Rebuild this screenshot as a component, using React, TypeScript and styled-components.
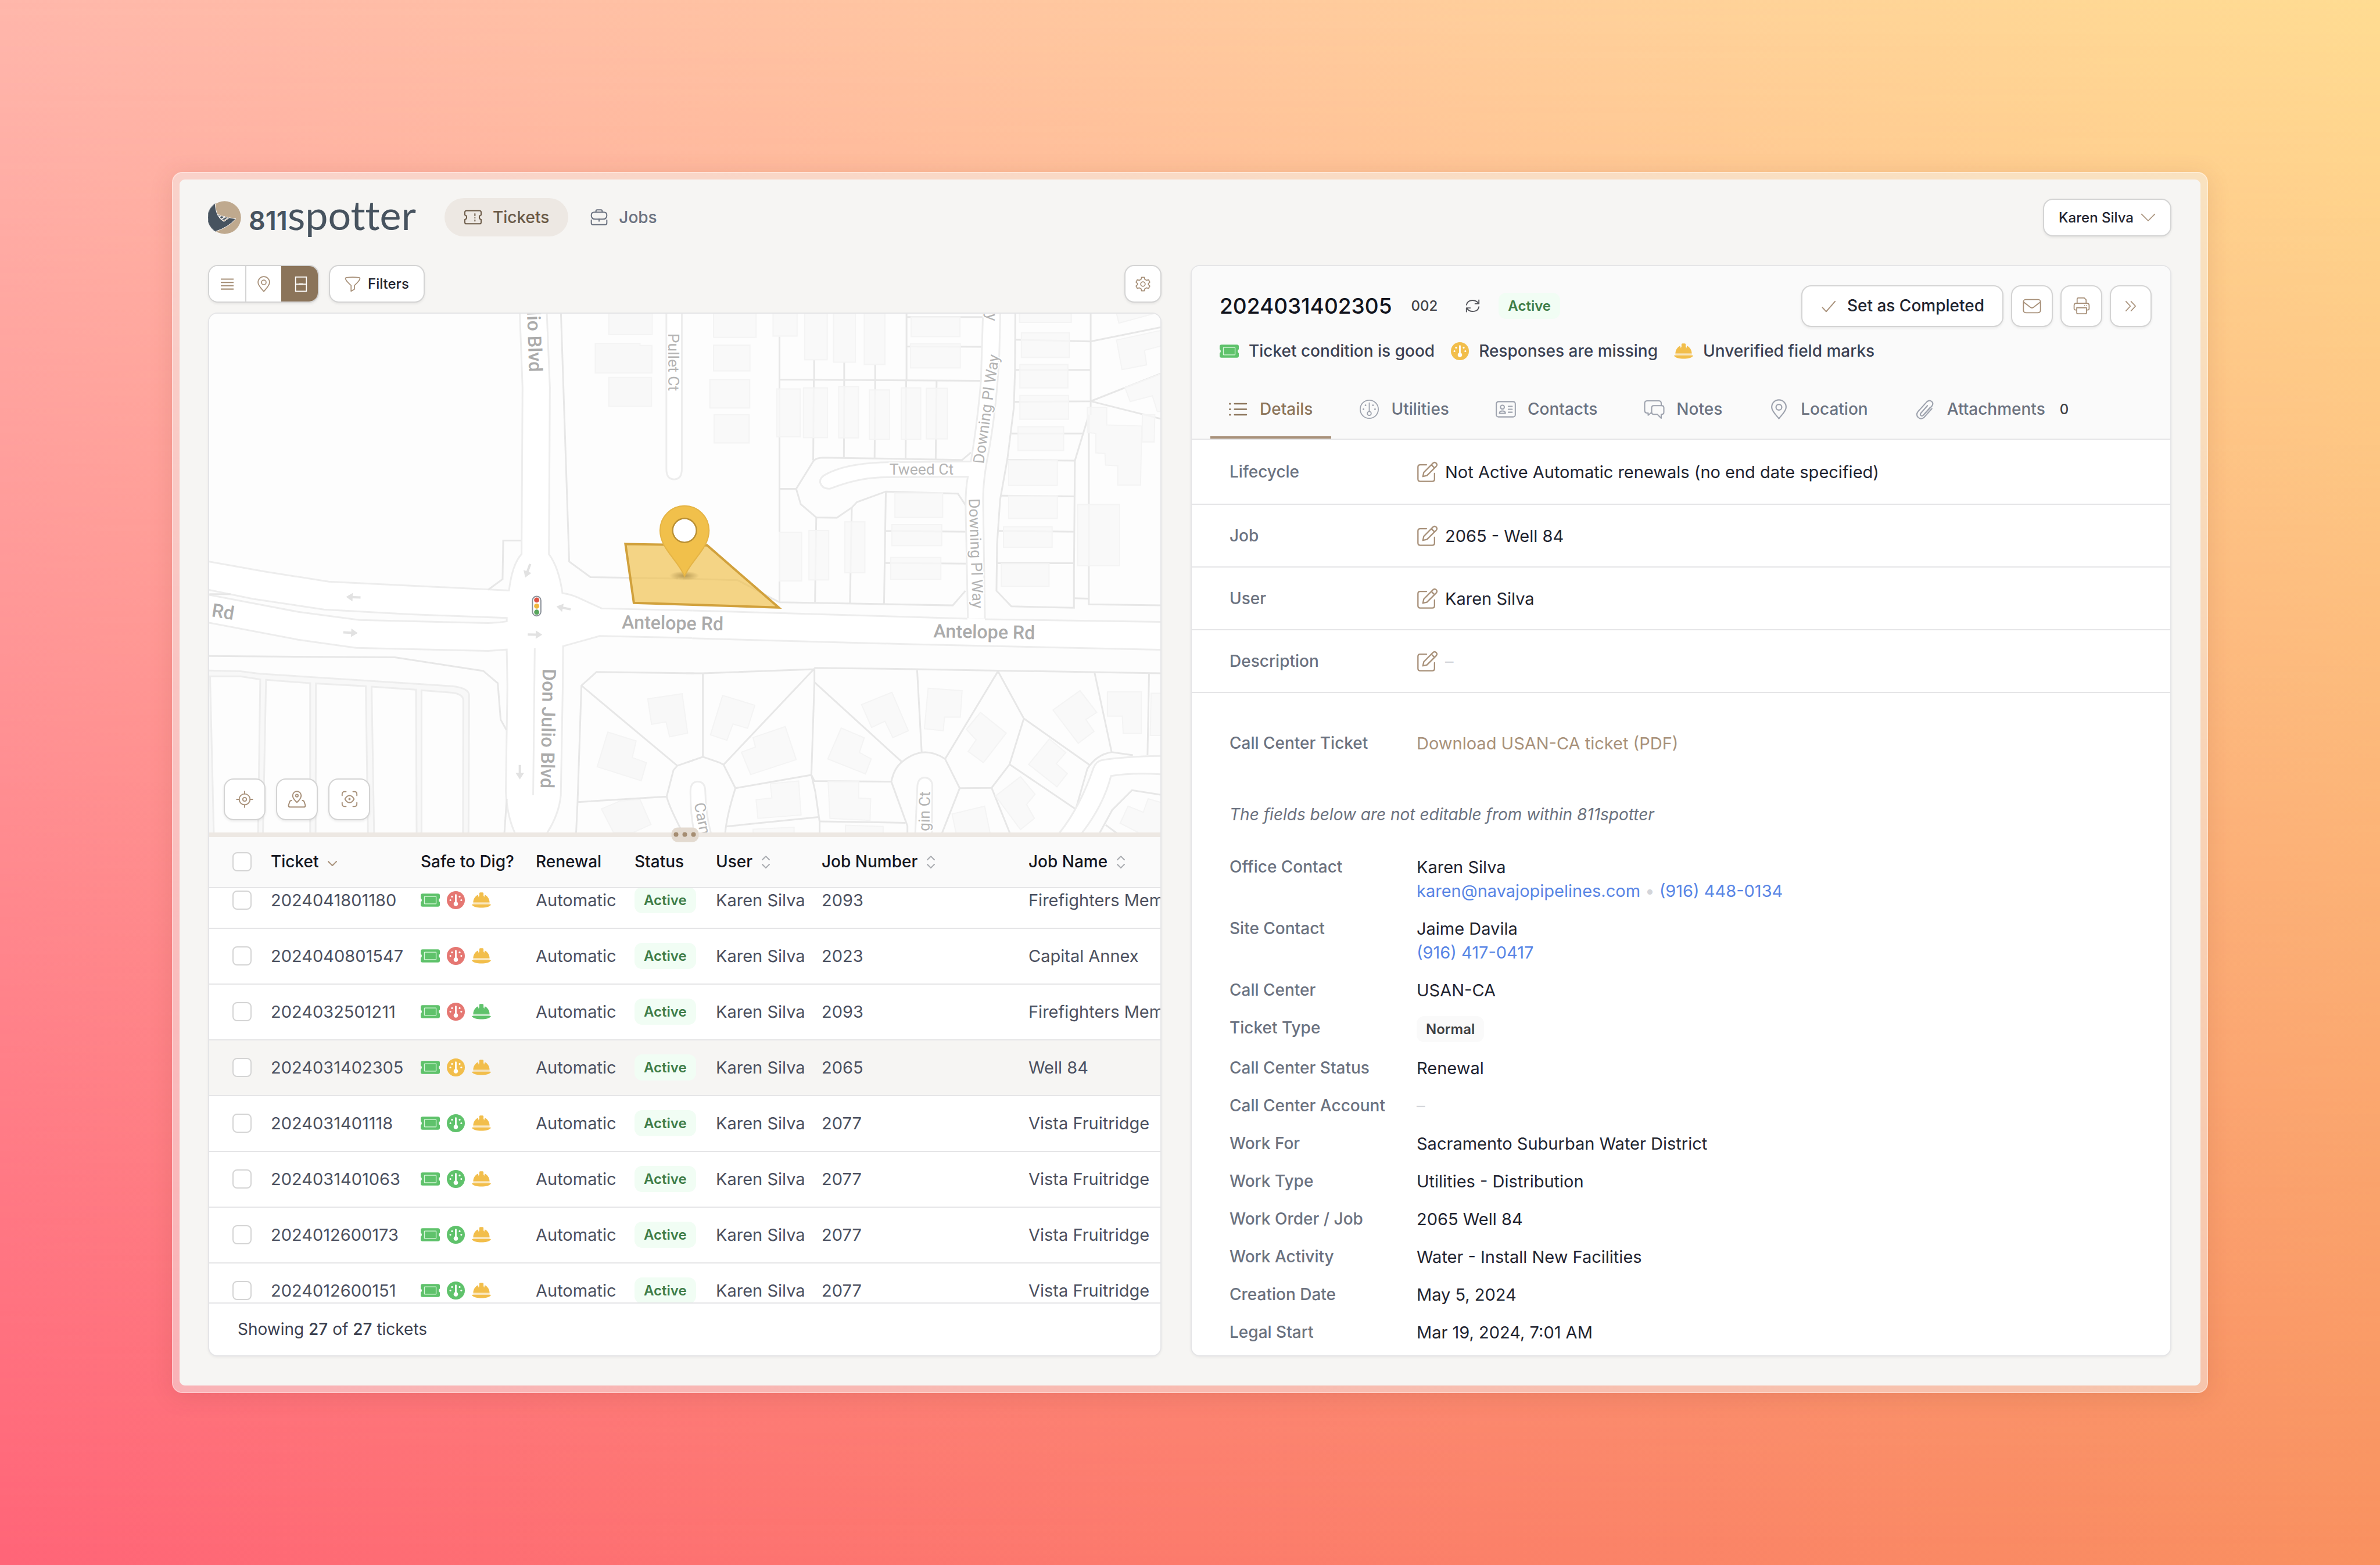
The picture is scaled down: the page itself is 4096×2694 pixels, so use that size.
import React, { useEffect, useRef } from "react";
import styled, { createGlobalStyle, css } from "styled-components";

const sans = `"Inter", "Liberation Sans", sans-serif`;

const color = {
  tan: "#a8917a",
  brown: "#8b745a",
  ink: "#1f2430",
  body: "#4b5060",
  muted: "#6b7280",
  line: "#e5e5e7",
  edge: "#d4d4d4",
  green: "#5fc26b",
  red: "#e57772",
  yellow: "#f2be4b",
};

const GlobalStyle = createGlobalStyle`
  *, *::before, *::after { box-sizing: border-box; }
  html, body { margin: 0; }
  body {
    font-family: ${sans};
    font-size: 28px;
    line-height: 41px;
    color: ${color.ink};
    -webkit-font-smoothing: antialiased;
  }
  button, input { font: inherit; color: inherit; }
  dl, dd, h1, p { margin: 0; }
`;

/* ---------- page shell ---------- */

const Backdrop = styled.div`
  position: relative;
  z-index: 0;
  min-height: 100vh;
  display: flex;
  padding: 296px;
  background: linear-gradient(to right, #ff6578, #f99160);
  &::before {
    content: "";
    position: absolute;
    inset: 0;
    z-index: -1;
    background: linear-gradient(to right, #ffb7ab, #ffdc92);
    mask-image: linear-gradient(to bottom, #000, transparent);
  }
`;

const Frame = styled.div`
  flex: 1;
  min-width: 0;
  display: flex;
  padding: 11px;
  border: 2px solid rgba(255, 255, 255, 0.6);
  border-radius: 18px;
  background: rgba(244, 244, 242, 0.5);
  background-clip: padding-box;
  box-shadow: 0 6px 40px rgba(120, 60, 40, 0.14);
`;

const Window = styled.div`
  flex: 1;
  min-width: 0;
  display: flex;
  flex-direction: column;
  gap: 49px;
  padding: 32px 50px 50px 49px;
  border-radius: 9px;
  background: #f6f5f3;
`;

const TopBar = styled.header`
  display: flex;
  align-items: center;
  height: 66px;
`;

const Brand = styled.a`
  display: flex;
  align-items: center;
  gap: 13px;
  color: #47535f;
  text-decoration: none;
`;

const Wordmark = styled.span`
  font-family: "Lato", sans-serif;
  font-size: 70px;
  line-height: 66px;
  font-variant-ligatures: none;
  b {
    font-family: ${sans};
    font-size: 45px;
    font-weight: 600;
  }
`;

const Nav = styled.nav`
  display: flex;
  gap: 4px;
  margin-left: 49px;
  flex: 1;
`;

const NavLink = styled.a<{ $active?: boolean }>`
  display: flex;
  align-items: center;
  gap: 18px;
  height: 66px;
  padding: 0 33px;
  border-radius: 33px;
  font-weight: 500;
  text-decoration: none;
  color: ${(p) => (p.$active ? "#6b5a47" : color.muted)};
  background: ${(p) => (p.$active ? "#ede8e3" : "transparent")};
`;

const Columns = styled.main`
  flex: 1;
  min-height: 0;
  display: grid;
  grid-template-columns: minmax(0, 1641fr) minmax(0, 1688fr);
  gap: 50px;
`;

const LeftColumn = styled.section`
  display: flex;
  flex-direction: column;
  gap: 17px;
  min-height: 0;
`;

const Card = styled.section`
  flex: 1;
  min-height: 0;
  display: flex;
  flex-direction: column;
  overflow: hidden;
  border: 2px solid ${color.line};
  border-radius: 16px;
  background: #fff;
  box-shadow: 0 2px 4px rgba(0, 0, 0, 0.05);
`;

/* ---------- controls ---------- */

const raised = css`
  border: 2px solid ${color.edge};
  border-radius: 17px;
  background: #fff;
  box-shadow: 0 2px 4px rgba(0, 0, 0, 0.07);
`;

const Button = styled.button<{ $large?: boolean }>`
  ${raised}
  display: inline-flex;
  align-items: center;
  justify-content: center;
  gap: ${(p) => (p.$large ? 18 : 12)}px;
  height: ${(p) => (p.$large ? 72 : 65)}px;
  padding: 0 ${(p) => (p.$large ? 31 : 25)}px;
  font-size: ${(p) => (p.$large ? 28 : 24)}px;
  font-weight: 500;
  white-space: nowrap;
  svg { color: ${color.tan}; }
`;

const IconButton = styled.button<{ $large?: boolean }>`
  ${raised}
  display: inline-flex;
  align-items: center;
  justify-content: center;
  width: ${(p) => (p.$large ? 72 : 64)}px;
  height: ${(p) => (p.$large ? 72 : 65)}px;
  padding: 0;
  color: ${color.tan};
`;

const Toolbar = styled.div`
  display: flex;
  justify-content: space-between;
`;

const ToolGroup = styled.div`
  display: flex;
  gap: 17px;
`;

const Segments = styled.div`
  ${raised}
  display: flex;
  overflow: hidden;
`;

const Segment = styled.button<{ $active?: boolean }>`
  display: flex;
  align-items: center;
  justify-content: center;
  width: 62px;
  height: 61px;
  padding: 0;
  border: 0;
  border-left: 2px solid ${color.edge};
  color: ${(p) => (p.$active ? "#fff" : color.tan)};
  background: #fff;
  &:first-child { border-left: 0; }
  ${(p) =>
    p.$active &&
    css`
      margin: -2px -2px -2px 0;
      width: 65px;
      height: 65px;
      border-color: ${color.brown};
      background: ${color.brown};
    `}
`;

const Checkbox = styled.input.attrs({ type: "checkbox" })`
  appearance: none;
  display: block;
  width: 33px;
  height: 33px;
  margin: 0;
  border: 2px solid ${color.edge};
  border-radius: 8px;
  background: #fff;
`;

const Badge = styled.span<{ $tone?: "green" | "gray" }>`
  display: inline-block;
  padding: 0 16px;
  border-radius: 13px;
  font-size: 24px;
  line-height: 45px;
  font-weight: 600;
  color: ${(p) => (p.$tone === "gray" ? "#3f3f41" : "#3f7d48")};
  background: ${(p) => (p.$tone === "gray" ? "#fafafa" : "#f1fdf4")};
`;

/* ---------- map ---------- */

const MapPane = styled.div`
  position: relative;
  flex: 1 1 0;
  min-height: 0;
  overflow: hidden;
`;

const MapDrawing = styled.svg`
  position: absolute;
  inset: 0;
  width: 100%;
  height: 100%;
  background: #fdfdfd;
  path, polygon, rect { vector-effect: non-scaling-stroke; }
`;

const MapControls = styled.div`
  position: absolute;
  left: 25px;
  bottom: 21px;
  display: flex;
  gap: 18px;
`;

const Splitter = styled.div`
  position: relative;
  height: 8px;
  background: #ede8e3;
`;

const Grip = styled.button`
  position: absolute;
  left: 50%;
  top: 50%;
  z-index: 3;
  transform: translate(-50%, -50%);
  display: flex;
  align-items: center;
  justify-content: center;
  gap: 7px;
  width: 47px;
  height: 25px;
  padding: 0;
  border: 0;
  border-radius: 11px;
  background: #e3dad0;
  i {
    width: 8px;
    height: 8px;
    border-radius: 50%;
    background: #a58d72;
  }
`;

/* ---------- table ---------- */

const ListPane = styled.div`
  flex: 1 1 0;
  min-height: 0;
  display: flex;
  flex-direction: column;
`;

const Scroller = styled.div`
  flex: 1;
  min-height: 0;
  overflow: auto;
  scrollbar-width: none;
`;

const Table = styled.table`
  width: 100%;
  table-layout: fixed;
  border-collapse: separate;
  border-spacing: 0;
  color: ${color.body};
  th, td {
    padding: 0;
    text-align: left;
    white-space: nowrap;
    overflow: hidden;
    border-bottom: 2px solid ${color.line};
  }
  th:first-child, td:first-child { padding-left: 40px; }
  th {
    position: sticky;
    top: 0;
    z-index: 2;
    height: 88px;
    font-weight: 500;
    color: #14161f;
    background: #fafafa;
  }
  td {
    height: 96px;
    font-size: 29px;
  }
`;

const Row = styled.tr<{ $selected?: boolean }>`
  background: ${(p) => (p.$selected ? "#f6f5f3" : "#fff")};
`;

const HeadLabel = styled.span`
  display: flex;
  align-items: center;
  gap: 15px;
`;

const Signals = styled.span`
  display: flex;
  align-items: center;
  gap: 12px;
`;

const Footer = styled.footer`
  display: flex;
  align-items: center;
  height: 91px;
  padding: 0 49px;
  border-top: 2px solid ${color.line};
  color: #3c4150;
  b { font-weight: 500; }
`;

/* ---------- ticket details ---------- */

const DetailHead = styled.div`
  padding: 32px 32px 0 48px;
  border-bottom: 2px solid ${color.line};
  background: #fafafa;
`;

const TitleRow = styled.div`
  display: flex;
  align-items: center;
  height: 73px;
  gap: 13px;
  > svg { color: #55565c; }
`;

const Title = styled.h1`
  margin-right: 20px;
  font-size: 37px;
  line-height: 48px;
  font-weight: 500;
  color: #12141d;
`;

const Revision = styled.span`
  margin-right: 34px;
  font-size: 24px;
  font-weight: 500;
  color: #444448;
`;

const TitleBadge = styled.span`
  flex: 1;
  margin-left: 18px;
`;

const StatusLine = styled.div`
  display: flex;
  gap: 28px;
  margin-top: 21px;
  font-weight: 500;
  color: #3b4152;
`;

const StatusItem = styled.span`
  display: flex;
  align-items: center;
  gap: 17px;
`;

const Tabs = styled.div`
  display: flex;
  gap: 18px;
  margin: 27px 0 0 -16px;
`;

const Tab = styled.button<{ $active?: boolean }>`
  display: flex;
  align-items: center;
  gap: 20px;
  height: 103px;
  padding: 6px 32px 0 30px;
  border: 0;
  border-bottom: 4px solid ${(p) => (p.$active ? color.tan : "transparent")};
  background: none;
  font-weight: 500;
  color: ${(p) => (p.$active ? color.brown : color.muted)};
  svg { color: ${(p) => (p.$active ? color.brown : "#9ea3ae")}; }
  b {
    margin-left: 5px;
    font-size: 24px;
    font-weight: 500;
    color: #3f3f41;
  }
`;

const Fields = styled.dl`
  display: flex;
  flex-direction: column;
`;

const Field = styled.div<{ $ruled?: boolean }>`
  display: grid;
  grid-template-columns: 322px minmax(0, 1fr);
  padding: 12px 65px;
  ${(p) =>
    p.$ruled &&
    css`
      align-items: center;
      height: 108px;
      border-bottom: 2px solid ${color.line};
      &:first-child { height: 112px; }
    `}
  dt {
    font-weight: 500;
    color: ${color.muted};
  }
  dd { font-size: 29px; }
`;

const Editable = styled.dd`
  display: flex;
  align-items: center;
  gap: 12px;
`;

const EditButton = styled.button`
  display: flex;
  padding: 0;
  border: 0;
  background: none;
  color: ${color.tan};
`;

const Link = styled.a<{ $tan?: boolean }>`
  color: ${(p) => (p.$tan ? color.tan : "#5885e5")};
  text-decoration: none;
`;

const Faint = styled.span`
  color: #d3d5da;
`;

const Note = styled.p`
  padding: 70px 65px 37px;
  font-style: italic;
  color: ${color.muted};
`;

const Spacer = styled.div`
  height: 54px;
`;

/* ---------- icons ---------- */

type IconProps = { size?: number; w?: number; children?: React.ReactNode };

const Stroke = ({ size = 32, w = 1.5, children }: IconProps) => (
  <svg width={size} height={size} viewBox="0 0 24 24" fill="none" stroke="currentColor"
    strokeWidth={w} strokeLinecap="round" strokeLinejoin="round" aria-hidden="true">
    {children}
  </svg>
);

const TicketOutline = () => (
  <Stroke>
    <path d="M1.5 5.5Q1.5 3.5 3.5 3.5H20.5Q22.5 3.5 22.5 5.5V9A3.1 3.1 0 0 0 22.5 15V18.5Q22.5 20.5 20.5 20.5H3.5Q1.500 20.5 1.500 18.5V15A3.100 3.100 0 0 0 1.500 9Z" />
    <path d="M14.500 7.500V10M14.500 12.500V12.900M14.500 15.500V16.800" />
  </Stroke>
);

const Briefcase = () => (
  <Stroke size={32}>
    <path d="M8 5.500V4Q8 2.500 9.500 2.500H14.500Q16 2.500 16 4V5.500" />
    <path d="M6 5.500H18Q22 5.500 22 9.500Q22 14.500 16.500 14.500H7.500Q2 14.500 2 9.500Q2 5.500 6 5.500Z" />
    <path d="M12 14.500V17M2 15.500V19.500Q2 21.500 4 21.500H20Q22 21.500 22 19.500V15.500" />
  </Stroke>
);

const Lines = () => (
  <Stroke size={24} w={2.2}>
    <path strokeLinecap="butt" d="M1 3.500H23M1 9.200H23M1 14.900H23M1 20.600H23" />
  </Stroke>
);

const Pin = ({ size = 28 }: IconProps) => (
  <Stroke size={size}>
    <path d="M12 23C9 19 3.500 14.500 3.500 9.500A8.500 8.500 0 0 1 20.500 9.500C20.500 14.500 15 19 12 23Z" />
    <circle cx="12" cy="9.600" r="3.400" />
  </Stroke>
);

const SplitView = () => (
  <Stroke size={28}>
    <path strokeLinejoin="miter" d="M4 1.500H20V22.500H4ZM4 12H20" />
    <path strokeWidth="2.200" d="M9.500 12H14.500" />
  </Stroke>
);

const Funnel = () => (
  <Stroke size={28}>
    <path d="M2.600 2.500Q12 1 21.400 2.500Q23 2.900 22.500 4.600Q21.500 8 14.600 14V19.500L9.600 22.500V14Q2.500 8 1.500 4.600Q1 2.900 2.600 2.500Z" />
  </Stroke>
);

const Gear = () => (
  <Stroke size={28}>
    <path d="M10 2H14L14.700 5L17.300 6.500L20.200 5.600L22.200 9.100L20 11.200V12.800L22.200 14.900L20.200 18.400L17.300 17.500L14.700 19L14 22H10L9.300 19L6.700 17.500L3.800 18.400L1.800 14.900L4 12.800V11.200L1.800 9.100L3.800 5.600L6.700 6.500L9.300 5Z" />
    <circle cx="12" cy="12" r="3.300" />
  </Stroke>
);

const ChevronDown = () => (
  <Stroke size={26}><path d="M1.500 7L12 17.500L22.500 7" /></Stroke>
);

const Check = () => (
  <Stroke size={28} w={1.700}><path d="M3 14L8.500 20L21.500 5" /></Stroke>
);

const Mail = () => (
  <Stroke size={32} w={1.400}>
    <rect x="1" y="3.500" width="22" height="17" rx="3" />
    <path d="M1.500 7L10 13.500Q12 15 14 13.500L22.500 7" />
  </Stroke>
);

const Printer = () => (
  <Stroke size={31} w={1.400}>
    <path d="M6 8.500V3Q6 1.500 7.500 1.500H15.500L18 4V8.500M5.500 17.500H4Q2 17.500 2 15.500V11.500Q2 8.500 5 8.500H19Q22 8.500 22 11.500V15.500Q22 17.500 20 17.500H18.500" />
    <path d="M5.500 14.500H18.500V21Q18.500 22.500 17 22.500H7Q5.500 22.500 5.500 21Z" />
    <path d="M16 11.700H16.100M18.600 11.700H18.700" />
  </Stroke>
);

const DoubleChevron = () => (
  <Stroke size={28}><path d="M5 5L11.500 12L5 19M12.500 5L19 12L12.500 19" /></Stroke>
);

const Refresh = () => (
  <Stroke size={27} w={1.700}>
    <path d="M2.500 10.500Q4 3.500 12 3.500Q18 3.500 21 8.500M21.500 3V8.800H15.700M21.500 13.500Q20 20.500 12 20.500Q6 20.500 3 15.500M2.500 21V15.200H8.300" />
  </Stroke>
);

const ListIcon = () => (
  <Stroke size={35} w={1.600}>
    <path d="M8 5.500H22M8 12H22M8 18.500H22" />
    <path strokeWidth="2.200" d="M2.500 5.500H2.700M2.500 12H2.700M2.500 18.500H2.700" />
  </Stroke>
);

const GaugeOutline = () => (
  <Stroke size={35} w={1.200}>
    <circle cx="12" cy="12" r="10.700" />
    <path d="M12 4.500V14.500" />
    <circle cx="12" cy="17" r="2.300" />
    <path strokeWidth="2" d="M7.600 7.300V7.310M16.400 7.300V7.310M5.200 12V12.010M18.800 12V12.010" />
  </Stroke>
);

const IdCard = () => (
  <Stroke size={35} w={1.400}>
    <rect x="0.800" y="3" width="22.400" height="18" rx="2.500" />
    <circle cx="8" cy="9.500" r="2.300" />
    <path d="M4.500 16.800Q4.500 14 8 14T11.500 16.800ZM15 8.500H19.500M15 12H19.500M15 15.500H19.500" />
  </Stroke>
);

const Comments = () => (
  <Stroke size={36} w={1.400}>
    <path d="M9 16H8L5 18.500V16H4Q1 16 1 13V5Q1 2 4 2H17Q20 2 20 5V7.500" />
    <path d="M11.500 7.500H20.500Q23 7.500 23 10V15Q23 17.500 20.500 17.500H20V22L15.500 17.500H11.500Q9 17.500 9 15V10Q9 7.500 11.500 7.500Z" />
  </Stroke>
);

const Paperclip = () => (
  <Stroke size={36} w={1.400}>
    <path d="M17.500 10L10 18.500Q8.500 20 7.200 18.800Q6 17.500 7.300 16L14.800 7.500M19.800 11L11 20.800Q7.800 24 4.300 21.200Q1 18 4 14.200L14.300 2.900Q17 .600 19.600 2.700Q22 5 20 7.800L11.500 17" />
  </Stroke>
);

const Edit = () => (
  <Stroke size={37} w={1.500}>
    <path d="M11 4H4Q1.500 4 1.500 6.500V20Q1.500 22.500 4 22.500H17.500Q20 22.500 20 20V13.500" />
    <path d="M8 12.500L18.200 2.200Q20 .500 21.900 2.200Q23.500 4 21.800 5.800L11.500 16L7 17Z M16.500 4L20 7.500" />
  </Stroke>
);

const Crosshair = () => (
  <Stroke size={30}>
    <circle cx="12" cy="12" r="7.500" />
    <circle cx="12" cy="12" r="2.500" />
    <path d="M12 1V4.500M12 19.500V23M1 12H4.500M19.500 12H23" />
  </Stroke>
);

const MapPin = () => (
  <Stroke size={32}>
    <path d="M12 16Q6.500 11 6.500 7.200A5.500 5.500 0 0 1 17.500 7.200Q17.500 11 12 16Z" />
    <circle cx="12" cy="7.200" r="1.600" />
    <path d="M5 13.500Q3 13.500 2.500 15.500L1.200 19.500Q.800 22 3.300 22H20.700Q23.200 22 22.800 19.500L21.500 15.500Q21 13.500 19 13.500" />
  </Stroke>
);

const ScanEye = () => (
  <Stroke size={29} w={1.600}>
    <path d="M1.500 7V5Q1.500 1.500 5 1.500H7M17 1.500H19Q22.500 1.500 22.500 5V7M22.500 17V19Q22.500 22.500 19 22.500H17M7 22.500H5Q1.500 22.500 1.500 19V17" />
    <path d="M5.500 12Q8 7 12 7T18.500 12Q16 17 12 17T5.500 12Z" />
    <circle cx="12" cy="12" r=".8" />
  </Stroke>
);

const Sorter = ({ active }: { active?: boolean }) => (
  <svg width="16" height="24" viewBox="0 0 16 24" fill="none" strokeWidth="2" strokeLinecap="round"
    strokeLinejoin="round" stroke={active ? color.tan : "#a9abb0"} aria-hidden="true">
    {active ? <path d="M1 11L8 18L15 11" /> : <path d="M2 8L8 2L14 8M2 16L8 22L14 16" />}
  </svg>
);

const TicketSolid = ({ fill }: { fill: string }) => (
  <svg width="33" height="23" viewBox="0 0 41 28" aria-hidden="true">
    <path fill={fill} d="M4 0H37Q41 0 41 4V10A4.500 4.500 0 0 0 41 18V24Q41 28 37 28H4Q0 28 0 24V18A4.500 4.500 0 0 0 0 10V4Q0 0 4 0Z" />
    <rect x="8" y="6" width="25" height="16" rx="1" fill="none" stroke="#d9f7dc" strokeWidth="1.600" />
  </svg>
);

const GaugeSolid = ({ fill }: { fill: string }) => (
  <svg width="31" height="31" viewBox="0 0 38 38" aria-hidden="true">
    <circle cx="19" cy="19" r="19" fill={fill} />
    <g fill="#fff">
      <path d="M17.300 8A1.700 1.700 0 0 1 20.700 8V22.500A4.700 4.700 0 1 1 17.300 22.500Z" />
      <circle cx="11" cy="11.500" r="1.900" /><circle cx="27" cy="11.500" r="1.900" />
      <circle cx="7.500" cy="19" r="1.900" /><circle cx="30.500" cy="19" r="1.900" />
    </g>
  </svg>
);

const HatSolid = ({ fill }: { fill: string }) => (
  <svg width="33" height="27" viewBox="0 0 41 33" fill={fill} aria-hidden="true">
    <path d="M3 21.500C3 13.500 8 7.500 13 5L16 14V2Q16 0 18 0H23Q25 0 25 2V14L28 5C33 7.500 38 13.500 38 21.500Z" />
    <path d="M15 8H26V18H15Z" />
    <path opacity=".35" d="M3 21.500H38V25.500H3Z" />
    <path d="M1 25.500H40Q41.300 25.500 40.500 27C36 31.300 30 32.500 20.500 32.500S5 31.300 .5 27Q-.3 25.500 1 25.500Z" />
  </svg>
);

const LogoMark = () => (
  <svg width="57" height="57" viewBox="46 89 212 212" aria-hidden="true">
    <circle cx="152" cy="195" r="105" fill="#bfa98e" />
    <g fill="#47535f" stroke="#fff" strokeWidth="3.500" strokeLinejoin="round">
      <path d="M92 106C94 140 98 160 112 186Q124 208 148 221L182 196L224 203Q175 258 94 284A106 106 0 0 1 92 106Z" />
      <path d="M107 177L126 180L118 190Z" />
      <path d="M117 190L133 185L154 189L132 203Z" />
      <path d="M132 207L160 192L176 194L148 213Z" />
    </g>
    <path d="M92 106A106 106 0 0 0 94 284" fill="none" stroke="#47535f" strokeWidth="3.500" />
  </svg>
);

/* ---------- street map ---------- */

const westBuildings = [
  "1265 12 1400 12 1400 74 1265 74",
  "1223 100 1362 100 1362 106 1399 106 1399 187 1223 187",
  "1265 200 1398 200 1398 285 1265 285",
  "1386 1146 1493 1131 1510 1247 1454 1258 1443 1214 1398 1221",
  "1262 1244 1350 1270 1338 1319 1382 1334 1366 1387 1229 1346",
  "1242 1470 1300 1447 1362 1442 1396 1516 1340 1540 1280 1540",
];

const eastLots: [number, number, number, number][] = [
  [70, 12, 140, 70], [70, 105, 120, 76], [58, 206, 131, 84], [72, 310, 115, 83],
  [266, 12, 79, 66], [370, 12, 74, 136], [465, 12, 72, 143], [566, 12, 68, 150],
  [720, 22, 161, 58], [718, 101, 164, 71], [278, 234, 77, 141], [366, 231, 79, 146],
  [482, 227, 65, 151], [583, 237, 66, 145], [688, 231, 64, 151], [770, 232, 70, 149],
  [1077, 12, 170, 26], [1083, 69, 158, 72], [1078, 162, 158, 69], [1078, 253, 160, 70],
  [1072, 345, 150, 70], [1041, 445, 160, 73], [1041, 549, 160, 66], [1024, 640, 160, 60],
  [1017, 748, 157, 67], [667, 540, 157, 72], [657, 633, 164, 62], [653, 730, 165, 64],
  [286, 656, 74, 143], [384, 650, 65, 146], [502, 625, 66, 150], [1268, 574, 138, 180],
];

const eastBuildings = [
  "1300 288 1364 288 1364 340 1479 343 1475 517 1400 517 1400 460 1360 458 1358 424 1328 422 1328 365 1300 362",
  "1481 310 1522 310 1520 390 1480 390",
  "1396 90 1540 62 1540 108 1488 120 1495 163 1414 177",
  "1396 12 1520 12 1404 40",
  "1424 230 1540 190 1540 300 1530 300 1514 254 1441 271",
  "100 1136 206 1165 182 1233 134 1220 114 1268 60 1252",
  "200 1260 306 1228 342 1325 192 1369 162 1303 208 1288",
  "257 1396 350 1388 358 1488 216 1498 210 1443 262 1438",
  "447 1390 548 1390 548 1438 587 1440 585 1504 453 1498",
  "490 1232 566 1261 550 1304 589 1323 570 1367 446 1323",
  "557 1163 657 1127 711 1240 660 1260 634 1212 590 1230",
  "776 1115 888 1122 882 1200 830 1200 826 1240 764 1234",
  "948 1186 1033 1247 958 1334 908 1301 934 1267 902 1236",
  "1276 1122 1331 1186 1295 1207 1322 1242 1270 1277 1187 1179",
  "1366 1125 1478 1125 1478 1248 1418 1248 1415 1197 1366 1197",
  "1510 1130 1560 1130 1560 1254 1507 1254",
  "1175 1264 1229 1304 1198 1337 1234 1366 1200 1405 1107 1339",
  "1080 1375 1128 1427 1100 1457 1126 1498 1080 1531 998 1432",
  "855 1485 962 1462 982 1550 870 1550",
  "200 1530 335 1524 335 1550 200 1550",
  "504 1518 628 1522 628 1550 504 1550",
  "1434 1462 1484 1480 1500 1440 1560 1456 1560 1550 1490 1550 1408 1512",
];

const eastParcels = [
  "M287 80V862M287 206L950 210M401 148V206M500 155V206M602 162V206M705 12V206",
  "M400 206L398 444M500 206L499 436M602 207L600 438M704 208L702 440M804 208L801 441",
  "M705 22H955M705 109L952 110M287 528H342L398 447Q405 437 430 436L888 443L917 421",
  "M342 528L357 573L408 612L476 613L525 583L542 567L637 536L874 542L900 577",
  "M408 612L404 862M525 583L519 864M637 536L631 867M637 652L900 654M634 746L900 748",
  "M-30 792L150 797L287 862L857 871L899 828",
  "M1063 12L1062 180L1058 290L1037 440L1013 560L1003 690L1001 828L1050 874L1256 878L1256 770L1259 445L1037 443",
  "M1259 445L1305 310V868L1560 871M1256 850L1305 851M1311 12V310",
  "M1062 89L1311 94L1560 49M1062 178H1309M1060 272L1311 270L1560 182M1311 270L1560 326",
  "M1050 365H1290M1015 548L1257 550M1008 652L1256 654M1004 747H1256",
  "M35 1071V1317M-20 1071H35L400 1059L404 1055L740 1059L1007 1063L1560 1071",
  "M400 1059L103 1340M402 1059V1097L392 1370L405 1420L419 1508V1550M402 1097L690 1332",
  "M-20 1334L35 1317L88 1333L103 1340L142 1409Q110 1500 108 1550M142 1409L392 1370L402 1388L655 1390",
  "M109 1522L415 1494M419 1507L702 1511M740 1062L755 1305",
  "M708 1550V1520L655 1390Q664 1350 690 1332Q760 1280 832 1323L880 1409L818 1550",
  "M832 1323L1006 1065L1091 1204L1044 1339L985 1408L880 1409M1091 1204L1308 1341M1044 1339L1262 1471",
  "M985 1408L1049 1550M1324 1070L1380 1303L1450 1312M1503 1072L1498 1312M1262 1471L1300 1352Q1330 1310 1380 1303",
  "M1335 1550L1382 1473L1447 1415L1560 1431M1360 1517L1410 1550",
];

const Arrow = ({ x, y, turn }: { x: number; y: number; turn: number }) => (
  <path transform={`translate(${x} ${y}) rotate(${turn})`} fill="#e2e2e2"
    d="M-15 -2.500H2V-9L16 0L2 9V2.500H-15Z" />
);

const StreetMap = () => (
  <MapDrawing viewBox="446 669 2036 1110" preserveAspectRatio="xMidYMid slice" role="img"
    aria-label="Map of Antelope Rd and Don Julio Blvd">
    <g transform="translate(430 660) scale(.6888 .7273)" stroke="#ededed" strokeWidth="3" fill="none">
      <g fill="#f8f8f8" stroke="#f4f4f4" strokeWidth="2">
        {westBuildings.map((p) => <polygon key={p} points={p} />)}
      </g>
      <path fill="#fff" stroke="none" d="M0 738L200 772L395 801L955 827Q965 750 994 720L997 230L988 0H1072L1082 230L1079 720Q1110 760 1121 835Q1150 838 1243 880L1560 886V968L1237 961L1123 991L1116 1430Q1110 1490 1073 1550H972Q950 1500 945 1420L948 1001L890 1005L480 996L300 972L0 918Z" />
      <path fill="#f8f8f8" d="M0 1062L120 1065L180 1072L780 1109Q830 1115 831 1135L829 1560H0Z" />
      <g fill="#fdfdfd">
        <path d="M26 1080H120L182 1089L175 1560H38Z" />
        <path d="M200 1090L337 1100V1560H190Z" />
        <path d="M355 1101L510 1109L517 1560H354Z" />
        <path d="M528 1110L666 1119L668 1560H536Z" />
        <path d="M683 1121L780 1128Q812 1132 813 1150L812 1560H683Z" />
        <path d="M0 821L160 852L380 883L640 897L948 908V918Q920 923 890 923L490 914L300 890L0 836Z" />
      </g>
      <path d="M0 738L200 772L395 801L955 827Q965 750 994 720L997 230L988 0M1072 0L1082 230L1079 720Q1110 760 1121 835Q1150 838 1190 857L1243 880L1525 886" />
      <path d="M0 918L300 972L480 996L890 1005L948 1001L950 1110L945 1420Q950 1500 978 1550M1525 967L1237 961L1123 991L1122 1110L1116 1430Q1110 1490 1067 1550M1035 997L1030 1430" />
      <path fill="#fff" d="M1444 0V470Q1444 500 1468 500Q1492 500 1492 470V0" />
      <g stroke="#e7e7e7">
        <path d="M890 825L935 794L937 680H992M1116 0L1142 742L1208 788L1480 792M24 838H90" />
        <path d="M0 1020L600 1024L875 1064L920 1100L929 1207L947 1238M948 1440L940 1550" />
        <path d="M1163 1550L1168 1450L1180 1107L1227 1067L1530 1071M1180 1107L1478 1343L1530 1326M1478 1343L1466 1356L1445 1433Q1450 1460 1500 1550M1168 1450L1445 1434" />
      </g>
    </g>

    <g transform="translate(1480 660) scale(.6505 .7273)" stroke="#ededed" strokeWidth="3" fill="none">
      <g stroke="#e7e7e7">{eastParcels.map((d) => <path key={d} d={d} />)}</g>
      <g fill="#f8f8f8" fillOpacity=".8" stroke="#f4f4f4" strokeWidth="2">
        {eastLots.map(([x, y, width, height]) => (
          <rect key={`${x}-${y}`} x={x} y={y} width={width} height={height} />
        ))}
        {eastBuildings.map((p) => <polygon key={p} points={p} />)}
      </g>
      <path fill="#fff" d="M957 0L950 210Q940 320 917 447L620 450Q500 455 440 485Q418 495 421 510Q428 530 455 527Q540 497 620 494L907 492Q898 530 900 600L907 912H963L957 560Q957 500 975 420Q1000 300 1010 140L1014 0" />
      <path fill="#fff" stroke="none" d="M0 886L905 909L1560 920V1002L700 985L0 968Z" />
      <path d="M0 886L905 910M963 912L1560 920M0 968L700 985L1560 1002" />
      <path fill="#fff" d="M12 1560Q-6 1500 -6 1420Q-6 1390 18 1390Q43 1390 43 1420Q45 1500 68 1560" />
      <path fill="#fff" d="M733 1560L741 1400Q745 1378 765 1378Q788 1380 790 1400L788 1560" />
      <path fill="#fff" d="M1190 1560Q1270 1480 1320 1350Q1330 1328 1350 1326Q1430 1315 1560 1314V1369Q1450 1362 1378 1373Q1350 1470 1265 1560Z" />
    </g>

    <Arrow x={755} y={1276} turn={182} />
    <Arrow x={748} y={1352} turn={3} />
    <Arrow x={1143} y={1356} turn={1} />
    <Arrow x={1205} y={1299} turn={191} />
    <Arrow x={1128} y={1219} turn={110} />
    <Arrow x={1111} y={1650} turn={90} />

    <g fontFamily="Roboto, sans-serif" fill="#ababab" stroke="#fff" strokeWidth="5" paintOrder="stroke">
      <g fontSize="40" fontWeight="500">
        <text transform="translate(1131 794) rotate(88)" textAnchor="end">lio Blvd</text>
        <text transform="translate(1160 1429) rotate(91)">Don Julio Blvd</text>
        <text transform="translate(450 1317) rotate(9)">Rd</text>
        <text transform="translate(1329 1343) rotate(1)">Antelope Rd</text>
        <text transform="translate(1996 1362) rotate(1)">Antelope Rd</text>
      </g>
      <g fontSize="33" fill="#b4b4b4">
        <text transform="translate(1429 711) rotate(90)">Pullet Ct</text>
        <text transform="translate(1902 1013)">Tweed Ct</text>
        <text transform="translate(2104 991) rotate(-82)">Downing Pl Way</text>
        <text transform="translate(2072 1065) rotate(88)">Downing Pl Way</text>
        <text transform="translate(2110 684) rotate(92)" textAnchor="end">y</text>
        <text transform="translate(1989 1692) rotate(-89)" textAnchor="end">gin Ct</text>
        <text transform="translate(1484 1718) rotate(79)">Carn</text>
      </g>
    </g>

    <g strokeWidth="2">
      <rect x="1138" y="1274" width="18" height="42" rx="9" fill="#fff" stroke="#8b9199" />
      <circle cx="1147" cy="1282" r="5.500" fill="#dd5345" />
      <circle cx="1147" cy="1295" r="5.500" fill="#efb73e" />
      <circle cx="1147" cy="1308" r="5.500" fill="#58a55c" />
    </g>

    <polygon points="1337 1162 1512 1165 1665 1298 1355 1288" fill="#f0bf45" fillOpacity=".65"
      stroke="#d1a13c" strokeWidth="4" strokeLinejoin="miter" />
    <defs>
      <radialGradient id="pinShade">
        <stop offset="0" stopColor="#7a5f22" stopOpacity=".5" />
        <stop offset="1" stopColor="#7a5f22" stopOpacity="0" />
      </radialGradient>
    </defs>
    <ellipse cx="1463" cy="1230" rx="32" ry="10" fill="url(#pinShade)" />
    <path d="M1463.500 1231C1450 1197 1411 1172 1411 1133A52.500 52.500 0 0 1 1516 1133C1516 1172 1477 1197 1463.500 1231Z"
      fill="#f1c04b" stroke="#e5b445" strokeWidth="2" />
    <circle cx="1463.500" cy="1133" r="25.500" fill="#fff" stroke="#b98f33" strokeWidth="3" />
  </MapDrawing>
);

/* ---------- data ---------- */

type Tone = "green" | "red" | "yellow";

const tickets: { id: string; gauge: Tone; hat: Tone; job: string; name: string; selected?: boolean }[] = [
  { id: "2024041801180", gauge: "red", hat: "yellow", job: "2093", name: "Firefighters Memorial" },
  { id: "2024040801547", gauge: "red", hat: "yellow", job: "2023", name: "Capital Annex" },
  { id: "2024032501211", gauge: "red", hat: "green", job: "2093", name: "Firefighters Memorial" },
  { id: "2024031402305", gauge: "yellow", hat: "yellow", job: "2065", name: "Well 84", selected: true },
  { id: "2024031401118", gauge: "green", hat: "yellow", job: "2077", name: "Vista Fruitridge" },
  { id: "2024031401063", gauge: "green", hat: "yellow", job: "2077", name: "Vista Fruitridge" },
  { id: "2024012600173", gauge: "green", hat: "yellow", job: "2077", name: "Vista Fruitridge" },
  { id: "2024012600151", gauge: "green", hat: "yellow", job: "2077", name: "Vista Fruitridge" },
];

const editable: [string, React.ReactNode][] = [
  ["Lifecycle", "Not Active Automatic renewals (no end date specified)"],
  ["Job", "2065 - Well 84"],
  ["User", "Karen Silva"],
  ["Description", <Faint>–</Faint>],
];

const readOnly: [string, React.ReactNode][] = [
  ["Office Contact", <>Karen Silva<br /><Link href="#email">karen@navajopipelines.com</Link> <Faint>•</Faint> <Link href="#phone">(916) 448-0134</Link></>],
  ["Site Contact", <>Jaime Davila<br /><Link href="#site-phone">(916) 417-0417</Link></>],
  ["Call Center", "USAN-CA"],
  ["Ticket Type", <Badge $tone="gray">Normal</Badge>],
  ["Call Center Status", "Renewal"],
  ["Call Center Account", <Faint>–</Faint>],
  ["Work For", "Sacramento Suburban Water District"],
  ["Work Type", "Utilities - Distribution"],
  ["Work Order / Job", "2065 Well 84"],
  ["Work Activity", "Water - Install New Facilities"],
  ["Creation Date", "May 5, 2024"],
  ["Legal Start", "Mar 19, 2024, 7:01 AM"],
];

const columnWidths = [106, 258, 198, 170, 140, 182, 356];

const TicketTable = () => {
  const scroller = useRef<HTMLDivElement>(null);
  useEffect(() => {
    if (scroller.current) scroller.current.scrollTop = 26;
  }, []);
  return (
    <Scroller ref={scroller}>
      <Table>
        <colgroup>
          {columnWidths.map((width, i) => <col key={i} style={{ width }} />)}
          <col />
        </colgroup>
        <thead>
          <tr>
            <th><Checkbox aria-label="Select all tickets" /></th>
            <th><HeadLabel>Ticket <Sorter active /></HeadLabel></th>
            <th>Safe to Dig?</th>
            <th>Renewal</th>
            <th>Status</th>
            <th><HeadLabel>User <Sorter /></HeadLabel></th>
            <th><HeadLabel>Job Number <Sorter /></HeadLabel></th>
            <th><HeadLabel>Job Name <Sorter /></HeadLabel></th>
          </tr>
        </thead>
        <tbody>
          {tickets.map((t) => (
            <Row key={t.id} $selected={t.selected}>
              <td><Checkbox aria-label={`Select ticket ${t.id}`} /></td>
              <td>{t.id}</td>
              <td>
                <Signals>
                  <TicketSolid fill={color.green} />
                  <GaugeSolid fill={color[t.gauge]} />
                  <HatSolid fill={color[t.hat]} />
                </Signals>
              </td>
              <td>Automatic</td>
              <td><Badge>Active</Badge></td>
              <td>Karen Silva</td>
              <td>{t.job}</td>
              <td>{t.name}</td>
            </Row>
          ))}
        </tbody>
      </Table>
    </Scroller>
  );
};

export default function App() {
  return (
    <>
      <GlobalStyle />
      <Backdrop>
        <Frame>
          <Window>
            <TopBar>
              <Brand href="#home">
                <LogoMark />
                <Wordmark><b>811</b>spotter</Wordmark>
              </Brand>
              <Nav>
                <NavLink href="#tickets" $active><TicketOutline />Tickets</NavLink>
                <NavLink href="#jobs"><Briefcase />Jobs</NavLink>
              </Nav>
              <Button>Karen Silva <ChevronDown /></Button>
            </TopBar>

            <Columns>
              <LeftColumn>
                <Toolbar>
                  <ToolGroup>
                    <Segments>
                      <Segment aria-label="List view"><Lines /></Segment>
                      <Segment aria-label="Map view"><Pin /></Segment>
                      <Segment aria-label="Split view" $active><SplitView /></Segment>
                    </Segments>
                    <Button><Funnel />Filters</Button>
                  </ToolGroup>
                  <IconButton aria-label="Table settings"><Gear /></IconButton>
                </Toolbar>
                <Card>
                  <MapPane>
                    <StreetMap />
                    <MapControls>
                      <IconButton $large aria-label="My location"><Crosshair /></IconButton>
                      <IconButton $large aria-label="Ticket location"><MapPin /></IconButton>
                      <IconButton $large aria-label="Fit to view"><ScanEye /></IconButton>
                    </MapControls>
                  </MapPane>
                  <Splitter><Grip aria-label="Resize panes"><i /><i /><i /></Grip></Splitter>
                  <ListPane>
                    <TicketTable />
                    <Footer><span>Showing <b>27</b> of <b>27</b> tickets</span></Footer>
                  </ListPane>
                </Card>
              </LeftColumn>

              <Card>
                <DetailHead>
                  <TitleRow>
                    <Title>2024031402305</Title>
                    <Revision>002</Revision>
                    <Refresh />
                    <TitleBadge><Badge>Active</Badge></TitleBadge>
                    <Button $large><Check />Set as Completed</Button>
                    <IconButton $large aria-label="Email"><Mail /></IconButton>
                    <IconButton $large aria-label="Print"><Printer /></IconButton>
                    <IconButton $large aria-label="Collapse panel"><DoubleChevron /></IconButton>
                  </TitleRow>
                  <StatusLine>
                    <StatusItem><TicketSolid fill={color.green} />Ticket condition is good</StatusItem>
                    <StatusItem><GaugeSolid fill={color.yellow} />Responses are missing</StatusItem>
                    <StatusItem><HatSolid fill={color.yellow} />Unverified field marks</StatusItem>
                  </StatusLine>
                  <Tabs role="tablist">
                    <Tab role="tab" aria-selected $active><ListIcon />Details</Tab>
                    <Tab role="tab"><GaugeOutline />Utilities</Tab>
                    <Tab role="tab"><IdCard />Contacts</Tab>
                    <Tab role="tab"><Comments />Notes</Tab>
                    <Tab role="tab"><Pin size={35} />Location</Tab>
                    <Tab role="tab"><Paperclip />Attachments <b>0</b></Tab>
                  </Tabs>
                </DetailHead>
                <Fields>
                  {editable.map(([label, value]) => (
                    <Field key={label} $ruled>
                      <dt>{label}</dt>
                      <Editable>
                        <EditButton aria-label={`Edit ${label}`}><Edit /></EditButton>
                        <span>{value}</span>
                      </Editable>
                    </Field>
                  ))}
                </Fields>
                <Spacer />
                <Fields>
                  <Field>
                    <dt>Call Center Ticket</dt>
                    <dd><Link $tan href="#pdf">Download USAN-CA ticket (PDF)</Link></dd>
                  </Field>
                </Fields>
                <Note>The fields below are not editable from within 811spotter</Note>
                <Fields>
                  {readOnly.map(([label, value]) => (
                    <Field key={label}>
                      <dt>{label}</dt>
                      <dd>{value}</dd>
                    </Field>
                  ))}
                </Fields>
              </Card>
            </Columns>
          </Window>
        </Frame>
      </Backdrop>
    </>
  );
}
